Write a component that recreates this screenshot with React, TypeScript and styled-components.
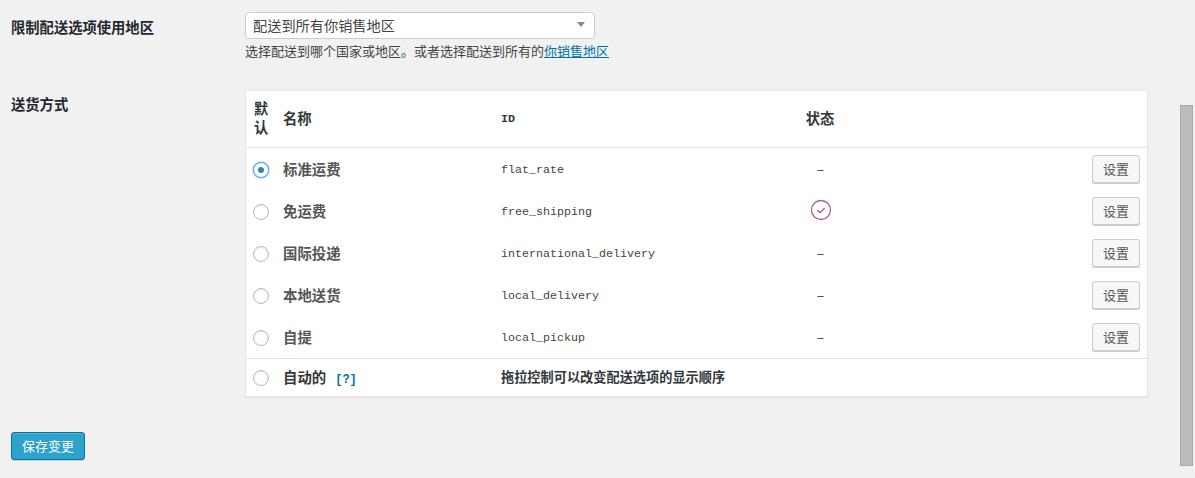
import React from "react";
import styled, { createGlobalStyle } from "styled-components";

const FONT = `"Noto Sans CJK SC", "Liberation Sans", sans-serif`;
const MONO = `"Liberation Mono", "Noto Sans CJK SC", monospace`;

const Global = createGlobalStyle`
  html, body { margin: 0; padding: 0; height: 478px; overflow: hidden; background: #f1f1f1; }
  body { font-family: ${FONT}; font-size: 13px; color: #444; }
`;

const Page = styled.form`
  position: relative;
  width: 1195px;
  height: 478px;
  padding: 12px 0 0 11px;
  box-sizing: border-box;
`;

const FieldRow = styled.div<{ $gap?: number }>`
  display: grid;
  grid-template-columns: 234px 903px;
  margin-bottom: ${(p) => p.$gap ?? 0}px;
`;

const FieldLabel = styled.div<{ $top: number }>`
  padding-top: ${(p) => p.$top}px;
  font-size: 14.3px;
  line-height: 20px;
  font-weight: 700;
  color: #23282d;
`;

const SelectBox = styled.div`
  display: flex;
  align-items: center;
  justify-content: space-between;
  box-sizing: border-box;
  width: 350px;
  height: 27px;
  padding: 0 9px 2px 7px;
  background: #fff;
  border: 1px solid #ccc;
  border-radius: 4px;
  font-size: 14.2px;
  color: #444;
`;

const Caret = styled.span`
  width: 0;
  height: 0;
  border-left: 4px solid transparent;
  border-right: 4px solid transparent;
  border-top: 5px solid #888;
`;

const Description = styled.p`
  margin: 3px 0 0;
  font-size: 13px;
  line-height: 18px;
  color: #444;
`;

const HelpLink = styled.a`
  color: #0073aa;
  text-decoration: underline;
`;

const Table = styled.table`
  width: 903px;
  border-collapse: separate;
  border-spacing: 0;
  table-layout: fixed;
  background: #fff;
  border: 1px solid #e5e5e5;
  box-shadow: 0 1px 1px rgba(0, 0, 0, 0.04);
`;

const HeadRow = styled.tr`
  height: 57px;
`;

const HeadCell = styled.th<{ $align?: string; $mono?: boolean }>`
  box-sizing: border-box;
  padding: 0 ${(p) => (p.$align ? 2 : 0)}px ${(p) => (p.$mono ? 1 : 4)}px 0;
  border-bottom: 1px solid #e1e1e1;
  text-align: ${(p) => p.$align ?? "left"};
  font-family: ${(p) => (p.$mono ? MONO : FONT)};
  font-size: ${(p) => (p.$mono ? "11.7px" : "14.3px")};
  font-weight: 700;
  color: #32373c;
`;

const DefaultHead = styled(HeadCell)`
  padding-left: 8px;
  line-height: 19px;
`;

const Row = styled.tr`
  height: 42px;
`;

const FootRow = styled.tr`
  height: 38px;
  & > td {
    box-sizing: border-box;
    border-top: 1px solid #e1e1e1;
  }
`;

const RadioCell = styled.td`
  padding: 1px 0 0 6px;
`;

const NameCell = styled.td<{ $dark?: boolean }>`
  padding: 0 0 2px;
  font-size: 14.4px;
  font-weight: 700;
  color: ${(p) => (p.$dark ? "#32373c" : "#555")};
`;

const Tip = styled.a`
  margin-left: 9px;
  font-family: ${MONO};
  font-size: 12px;
  font-weight: 700;
  color: #0073aa;
  text-decoration: none;
`;

const IdCell = styled.td`
  padding: 2px 0 0;
  font-family: ${MONO};
  font-size: 11.67px;
  color: #444;
`;

const StatusCell = styled.td`
  padding: 0 1px 2px 0;
  text-align: center;
  font-size: 14px;
  color: #444;
`;

const ActionCell = styled.td`
  padding: 0 7px 0 0;
  text-align: right;
`;

const FootNote = styled.td`
  padding: 0 0 2px;
  font-size: 13.2px;
  font-weight: 700;
  color: #32373c;
`;

const Radio = styled.span<{ $on?: boolean }>`
  box-sizing: border-box;
  width: 16px;
  height: 16px;
  margin-left: 1px;
  border-radius: 50%;
  background: #fff;
  border: 1px solid ${(p) => (p.$on ? "#5b9dd9" : "#b4b9be")};
  box-shadow: ${(p) =>
    p.$on ? "0 0 2px rgba(30,140,190,.8)" : "inset 0 1px 2px rgba(0,0,0,.1)"};
  display: flex;
  align-items: center;
  justify-content: center;
  &::after {
    content: "";
    display: ${(p) => (p.$on ? "block" : "none")};
    width: 6px;
    height: 6px;
    border-radius: 50%;
    background: #1e8cbe;
  }
`;

const SettingsButton = styled.button`
  box-sizing: border-box;
  width: 48px;
  height: 28px;
  padding: 0 0 2px;
  vertical-align: middle;
  font-family: ${FONT};
  font-size: 13px;
  color: #555;
  background: #f7f7f7;
  border: 1px solid #ccc;
  border-radius: 3px;
  box-shadow: 0 1px 0 #ccc;
`;

const SaveButton = styled.button`
  display: block;
  box-sizing: border-box;
  width: 74px;
  height: 28px;
  margin-top: 35px;
  padding: 0 0 2px;
  font-family: ${FONT};
  font-size: 13px;
  color: #fff;
  background: #2ea2cc;
  border: 1px solid #0074a2;
  border-radius: 3px;
  box-shadow: inset 0 1px 0 rgba(120, 200, 230, 0.5), 0 1px 0 rgba(0, 0, 0, 0.15);
`;

const ScrollThumb = styled.div`
  position: absolute;
  left: 1180px;
  top: 105px;
  width: 13px;
  height: 361px;
  box-sizing: border-box;
  background: #bcbcbc;
  border: 1px solid #a8a8a8;
`;

const CheckIcon = () => (
  <svg width="22" height="22" viewBox="0 0 22 22" style={{ display: "block", margin: "0 auto" }}>
    <circle cx="11" cy="11" r="9.5" fill="none" stroke="#a46497" strokeWidth="1.3" />
    <path d="M7.3 11.2l2.6 2.3 4.8-4.2" fill="none" stroke="#a46497" strokeWidth="1.5" />
  </svg>
);

const methods = [
  { name: "标准运费", id: "flat_rate", on: true, enabled: false },
  { name: "免运费", id: "free_shipping", on: false, enabled: true },
  { name: "国际投递", id: "international_delivery", on: false, enabled: false },
  { name: "本地送货", id: "local_delivery", on: false, enabled: false },
  { name: "自提", id: "local_pickup", on: false, enabled: false },
];

export default function App() {
  return (
    <Page>
      <Global />
      <FieldRow $gap={30}>
        <FieldLabel $top={5}>限制配送选项使用地区</FieldLabel>
        <div>
          <SelectBox>
            配送到所有你销售地区
            <Caret />
          </SelectBox>
          <Description>
            选择配送到哪个国家或地区。或者选择配送到所有的<HelpLink href="#">你销售地区</HelpLink>
          </Description>
        </div>
      </FieldRow>
      <FieldRow>
        <FieldLabel $top={4}>送货方式</FieldLabel>
        <Table>
          <colgroup>
            <col style={{ width: 37 }} />
            <col style={{ width: 218 }} />
            <col style={{ width: 290 }} />
            <col style={{ width: 60 }} />
            <col />
          </colgroup>
          <thead>
            <HeadRow>
              <DefaultHead>默<br />认</DefaultHead>
              <HeadCell>名称</HeadCell>
              <HeadCell $mono>ID</HeadCell>
              <HeadCell $align="center">状态</HeadCell>
              <HeadCell />
            </HeadRow>
          </thead>
          <tbody>
            {methods.map((m) => (
              <Row key={m.id}>
                <RadioCell><Radio $on={m.on} /></RadioCell>
                <NameCell>{m.name}</NameCell>
                <IdCell>{m.id}</IdCell>
                <StatusCell>{m.enabled ? <CheckIcon /> : "–"}</StatusCell>
                <ActionCell><SettingsButton type="button">设置</SettingsButton></ActionCell>
              </Row>
            ))}
          </tbody>
          <tfoot>
            <FootRow>
              <RadioCell><Radio /></RadioCell>
              <NameCell $dark>自动的<Tip href="#">[?]</Tip></NameCell>
              <FootNote colSpan={3}>拖拉控制可以改变配送选项的显示顺序</FootNote>
            </FootRow>
          </tfoot>
        </Table>
      </FieldRow>
      <SaveButton type="button">保存变更</SaveButton>
      <ScrollThumb />
    </Page>
  );
}
